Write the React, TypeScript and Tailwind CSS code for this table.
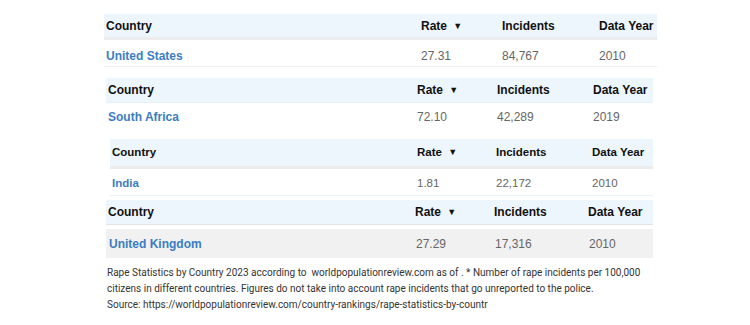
const headCls = 'font-bold text-[#111]';
const valCls = 'text-[#666]';
const linkCls = 'font-bold text-[#3b7dc2]';

type Row = { country: string; rate: string; incidents: string; year: string };

function Header() {
  return (
    <>
      <div className={headCls}>Country</div>
      <div className={headCls}>
        Rate <span className="ml-[3px] inline-block text-[9px] align-[1px]">▼</span>
      </div>
      <div className={headCls}>Incidents</div>
      <div className={headCls}>Data Year</div>
    </>
  );
}

function Cells({ row }: { row: Row }) {
  return (
    <>
      <div className={linkCls}>{row.country}</div>
      <div className={valCls}>{row.rate}</div>
      <div className={valCls}>{row.incidents}</div>
      <div className={valCls}>{row.year}</div>
    </>
  );
}

export default function App() {
  return (
    <div className="w-[750px] h-[325px] bg-white overflow-hidden font-['Liberation_Sans',Arial,sans-serif] text-[12px]">
      {/* United States */}
      <div className="ml-[104px] mt-[14px] w-[553px]">
        <div className="grid grid-cols-[315px_81px_97px_1fr] items-center pl-[2px] h-[23px] bg-[#eef6fd] border-b-[3px] border-[#ececec] box-content">
          <Header />
        </div>
        <div className="grid grid-cols-[315px_81px_97px_1fr] items-center pl-[2px] pt-[5px] h-[27px] border-b border-[#f0f0f0] box-border">
          <Cells row={{ country: 'United States', rate: '27.31', incidents: '84,767', year: '2010' }} />
        </div>
      </div>

      {/* South Africa */}
      <div className="ml-[106px] mt-[11px] w-[547px]">
        <div className="grid grid-cols-[309px_80px_96px_1fr] items-center pl-[2px] h-[25px] bg-[#eef6fd] border-b border-[#e8f0f8]">
          <Header />
        </div>
        <div className="grid grid-cols-[309px_80px_96px_1fr] items-center pl-[2px] pt-[2px] h-[26px]">
          <Cells row={{ country: 'South Africa', rate: '72.10', incidents: '42,289', year: '2019' }} />
        </div>
      </div>

      {/* India */}
      <div className="ml-[110px] mt-[10px] w-[543px] text-[11.5px]">
        <div className="grid grid-cols-[305px_79px_96px_1fr] items-center pl-[2px] h-[27px] bg-[#eef6fd] border-b-[3px] border-[#ececec] box-content">
          <Header />
        </div>
        <div className="grid grid-cols-[305px_79px_96px_1fr] items-center pl-[2px] pt-[3px] h-[27px] border-b border-[#eaf3fb]">
          <Cells row={{ country: 'India', rate: '1.81', incidents: '22,172', year: '2010' }} />
        </div>
      </div>

      {/* United Kingdom */}
      <div className="ml-[106px] mt-[4px] w-[547px]">
        <div className="grid grid-cols-[307px_79px_94px_1fr] items-center pl-[2px] h-[24px] bg-[#eef6fd] border-b border-[#e4e4e4] box-content">
          <Header />
        </div>
        <div className="grid grid-cols-[307px_79px_94px_1fr] items-center pl-[3px] mt-[4px] h-[29px] bg-[#f1f1f1]">
          <Cells row={{ country: 'United Kingdom', rate: '27.29', incidents: '17,316', year: '2010' }} />
        </div>
      </div>

      {/* Caption */}
      <div className="ml-[107px] mt-[7px] font-['Roboto',sans-serif] text-[10px] leading-[16px] text-[#333]">
        <p>
          Rape Statistics by Country 2023 according to &nbsp;worldpopulationreview.com as of . * Number of rape incidents per 100,000
        </p>
        <p>citizens in different countries. Figures do not take into account rape incidents that go unreported to the police.</p>
        <p>Source: https://worldpopulationreview.com/country-rankings/rape-statistics-by-countr</p>
      </div>
    </div>
  );
}
